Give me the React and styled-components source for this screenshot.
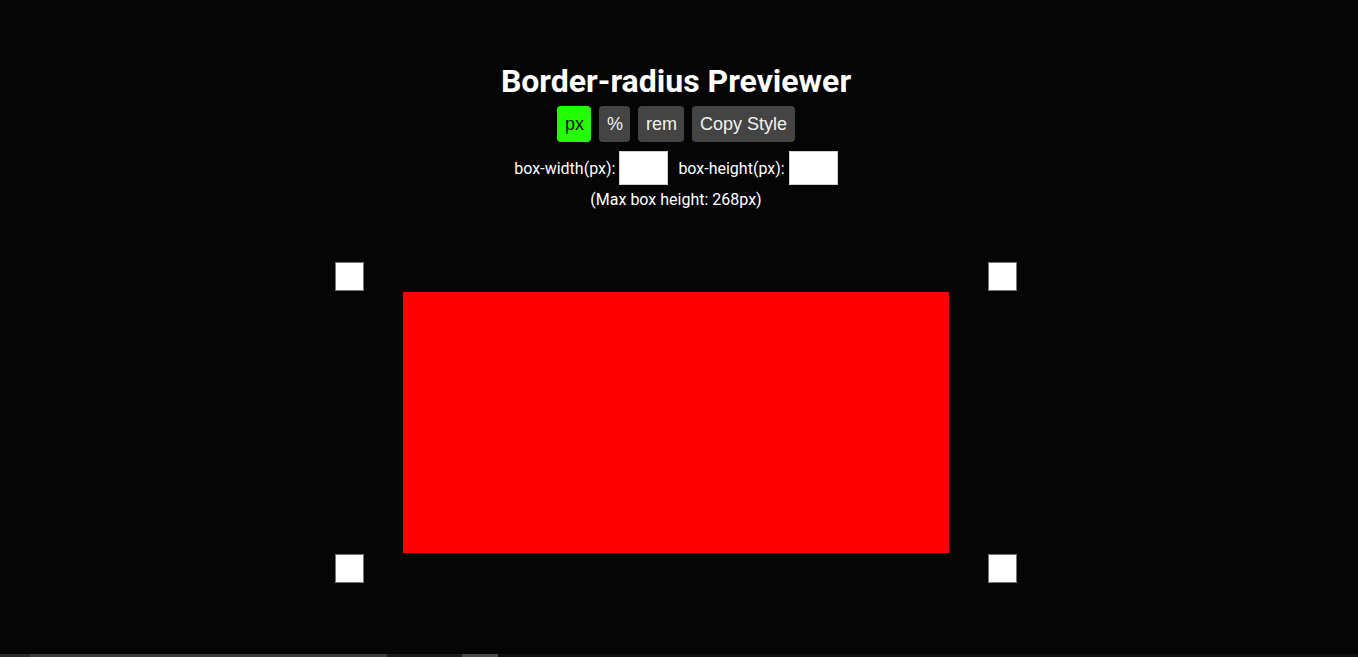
import React, { useState } from 'react'
import styled, { createGlobalStyle } from 'styled-components'

const GlobalStyle = createGlobalStyle`
  html, body {
    margin: 0;
    padding: 0;
    background: #050505;
  }
  body {
    font-family: Roboto, 'Liberation Sans', sans-serif;
    color: #fff;
    overflow: hidden;
  }
`

const Page = styled.div`
  height: 657px;
  display: flex;
  flex-direction: column;
  align-items: center;
  padding: 63px 6px 0 0;
  box-sizing: border-box;
  position: relative;
`

const Title = styled.h1`
  margin: 0;
  font-size: 32px;
  line-height: 37px;
  font-weight: 700;
`

const Toolbar = styled.div`
  display: flex;
  gap: 8px;
  margin-top: 6px;
`

const UnitButton = styled.button`
  height: 36px;
  padding: 0 7.5px;
  border: none;
  border-radius: 4px;
  font-family: 'Liberation Sans', Arial, sans-serif;
  font-size: 18px;
  background: ${(p) => (p.$active ? '#22ff00' : '#444444')};
  color: ${(p) => (p.$active ? '#111' : '#f2f2f2')};
  cursor: pointer;
`

const SizeRow = styled.div`
  display: flex;
  align-items: center;
  margin-top: 9px;
  font-size: 16px;
  gap: 10px;
`

const SizeField = styled.label`
  display: flex;
  align-items: center;
  gap: 4px;
`

const SizeInput = styled.input`
  width: 49px;
  height: 34px;
  box-sizing: border-box;
  border: 1px solid #d0d0d0;
  background: #fff;
  padding: 0;
`

const MaxNote = styled.p`
  margin: 5px 0 0;
  font-size: 16px;
  line-height: 19px;
`

const Preview = styled.div`
  margin-top: 53px;
  display: grid;
  grid-template-columns: 29px 546px 29px;
  grid-template-rows: 30px 262px 29px;
  column-gap: 39px;
`

const Corner = styled.input`
  width: 29px;
  height: 29px;
  box-sizing: border-box;
  border: 1px solid #767676;
  background: #fff;
  padding: 0;
  grid-column: ${(p) => p.$col};
  grid-row: ${(p) => p.$row};
`

const Box = styled.div`
  grid-column: 2;
  grid-row: 2;
  width: 546px;
  height: 261px;
  background: #ff0000;
`

const BottomStrip = styled.div`
  position: absolute;
  left: 0;
  right: 0;
  bottom: 0;
  height: 3px;
  display: flex;
`

const Segment = styled.div`
  width: ${(p) => p.$w};
  flex: ${(p) => (p.$w ? 'none' : 1)};
  background: ${(p) => p.$c};
`

export default function App() {
  const [unit, setUnit] = useState('px')

  return (
    <>
      <GlobalStyle />
      <Page>
        <Title>Border-radius Previewer</Title>
        <Toolbar>
          {['px', '%', 'rem'].map((u) => (
            <UnitButton key={u} $active={unit === u} onClick={() => setUnit(u)}>
              {u}
            </UnitButton>
          ))}
          <UnitButton>Copy Style</UnitButton>
        </Toolbar>
        <SizeRow>
          <SizeField>
            box-width(px): <SizeInput type='text' />
          </SizeField>
          <SizeField>
            box-height(px): <SizeInput type='text' />
          </SizeField>
        </SizeRow>
        <MaxNote>(Max box height: 268px)</MaxNote>
        <Preview>
          <Corner $col={1} $row={1} />
          <Corner $col={3} $row={1} />
          <Box />
          <Corner $col={1} $row={3} />
          <Corner $col={3} $row={3} />
        </Preview>
        <BottomStrip>
          <Segment $w='30px' $c='#2a2a2a' />
          <Segment $w='357px' $c='#3c3c3c' />
          <Segment $w='75px' $c='#1c1c1c' />
          <Segment $w='36px' $c='#4a4a4a' />
          <Segment $c='#141210' />
        </BottomStrip>
      </Page>
    </>
  )
}
